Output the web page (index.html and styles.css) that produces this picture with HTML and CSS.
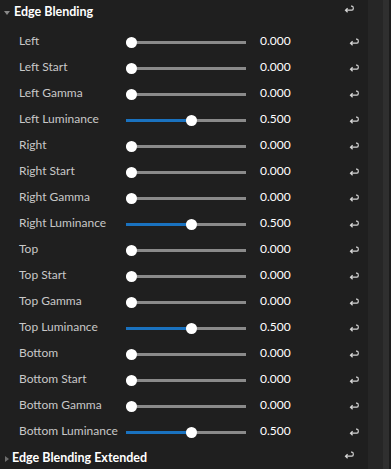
FILE: index.html
```html
<!DOCTYPE html>
<html>
<head>
  <title>Edge Blending</title>
  <link rel="stylesheet" href="styles.css">
</head>
<body>
  <div class="panel">
    <div class="section-head">
      <span class="caret down"></span>
      <span class="section-title">Edge Blending</span>
      <svg class="reset head-reset" viewBox="0 0 10 8"><path d="M7 1.2 H8 Q9.3 1.2 9.3 3.2 Q9.3 5.2 8 5.2 H1.5 M3.6 3.2 L1.5 5.2 L3.6 7.2"/></svg>
    </div>
    <div class="rows" id="rows"></div>
    <div class="section-head collapsed">
      <span class="caret right"></span>
      <span class="section-title">Edge Blending Extended</span>
      <svg class="reset head-reset" viewBox="0 0 10 8"><path d="M7 1.2 H8 Q9.3 1.2 9.3 3.2 Q9.3 5.2 8 5.2 H1.5 M3.6 3.2 L1.5 5.2 L3.6 7.2"/></svg>
    </div>
  </div>
  <div class="scroll-track"><div class="scroll-edge"></div></div>

  <script type="text/javascript">
    var sides = ['Left', 'Right', 'Top', 'Bottom'];
    var params = [
      {suffix: '', value: 0},
      {suffix: ' Start', value: 0},
      {suffix: ' Gamma', value: 0},
      {suffix: ' Luminance', value: 0.5}
    ];

    var resetSvg = '<svg class="reset" viewBox="0 0 10 8"><path d="M7 1.2 H8 Q9.3 1.2 9.3 3.2 Q9.3 5.2 8 5.2 H1.5 M3.6 3.2 L1.5 5.2 L3.6 7.2"/></svg>';

    var html = '';
    sides.forEach(side => {
      params.forEach(p => {
        var pct = p.value * 100;
        html +=
          `<div class="row">
            <span class="label">${side}${p.suffix}</span>
            <div class="slider">
              <div class="track"></div>
              <div class="fill" style="width: ${pct}%"></div>
              <div class="thumb" style="left: ${pct}%"></div>
            </div>
            <span class="value">${p.value.toFixed(3)}</span>
            ${resetSvg}
          </div>`;
      });
    });
    document.querySelector('#rows').innerHTML = html;
  </script>
</body>
</html>
```

FILE: styles.css
```css
html, body {height: 100%;}
body {
  margin: 0;
  background: #1f1f1f;
  font: 12px Lato, "Noto Sans", sans-serif;
  color: #c8c8c8;
  display: flex;
  overflow: hidden;
}

.panel {
  width: 368px;
  flex: none;
}

.section-head {
  height: 25px;
  display: flex;
  align-items: center;
  position: relative;
}
.section-head.collapsed {
  padding-top: 1px;
}

.section-title {
  color: #fff;
  font-weight: bold;
  font-size: 12.5px;
  margin-left: 4px;
  position: relative;
  top: -1px;
}

.caret {
  width: 0;
  height: 0;
  margin-left: 4px;
}
.caret.down {
  border-left: 3px solid transparent;
  border-right: 3px solid transparent;
  border-top: 4px solid #8a8a8a;
}
.caret.right {
  border-top: 3px solid transparent;
  border-bottom: 3px solid transparent;
  border-left: 4px solid #6e6e6e;
  margin-left: 5px;
  margin-right: -1px;
}

.reset {
  width: 10px;
  height: 8px;
  fill: none;
  stroke: #d6d6d6;
  stroke-width: 1.2;
}
.head-reset {
  position: absolute;
  left: 344px;
  top: 5px;
}
.collapsed .head-reset {
  top: 6px;
}

.rows {
  padding-top: 4px;
}

.row {
  height: 26px;
  display: grid;
  grid-template-columns: 107px 120px 103px 10px;
  align-items: center;
  padding-left: 19px;
  white-space: nowrap;
}

.label {
  color: #c8c8c8;
  position: relative;
  top: -2px;
}

.slider {
  position: relative;
  height: 11px;
  width: 120px;
}
.track, .fill {
  position: absolute;
  left: 0;
  top: 4px;
  height: 3px;
}
.track {
  right: 0;
  background: #8a8a8a;
}
.fill {
  background: #1a72bf;
}
.thumb {
  position: absolute;
  top: 0;
  width: 11px;
  height: 11px;
  border-radius: 50%;
  background: #fff;
}

.value {
  color: #fff;
  position: relative;
  top: -2px;
  padding-left: 14px;
}

.scroll-track {
  flex: 1;
  background: #262626;
  display: flex;
  justify-content: flex-end;
}
.scroll-edge {
  width: 6px;
  background: #2f2f2f;
  border-right: 2px solid #1c1c1c;
}
```
